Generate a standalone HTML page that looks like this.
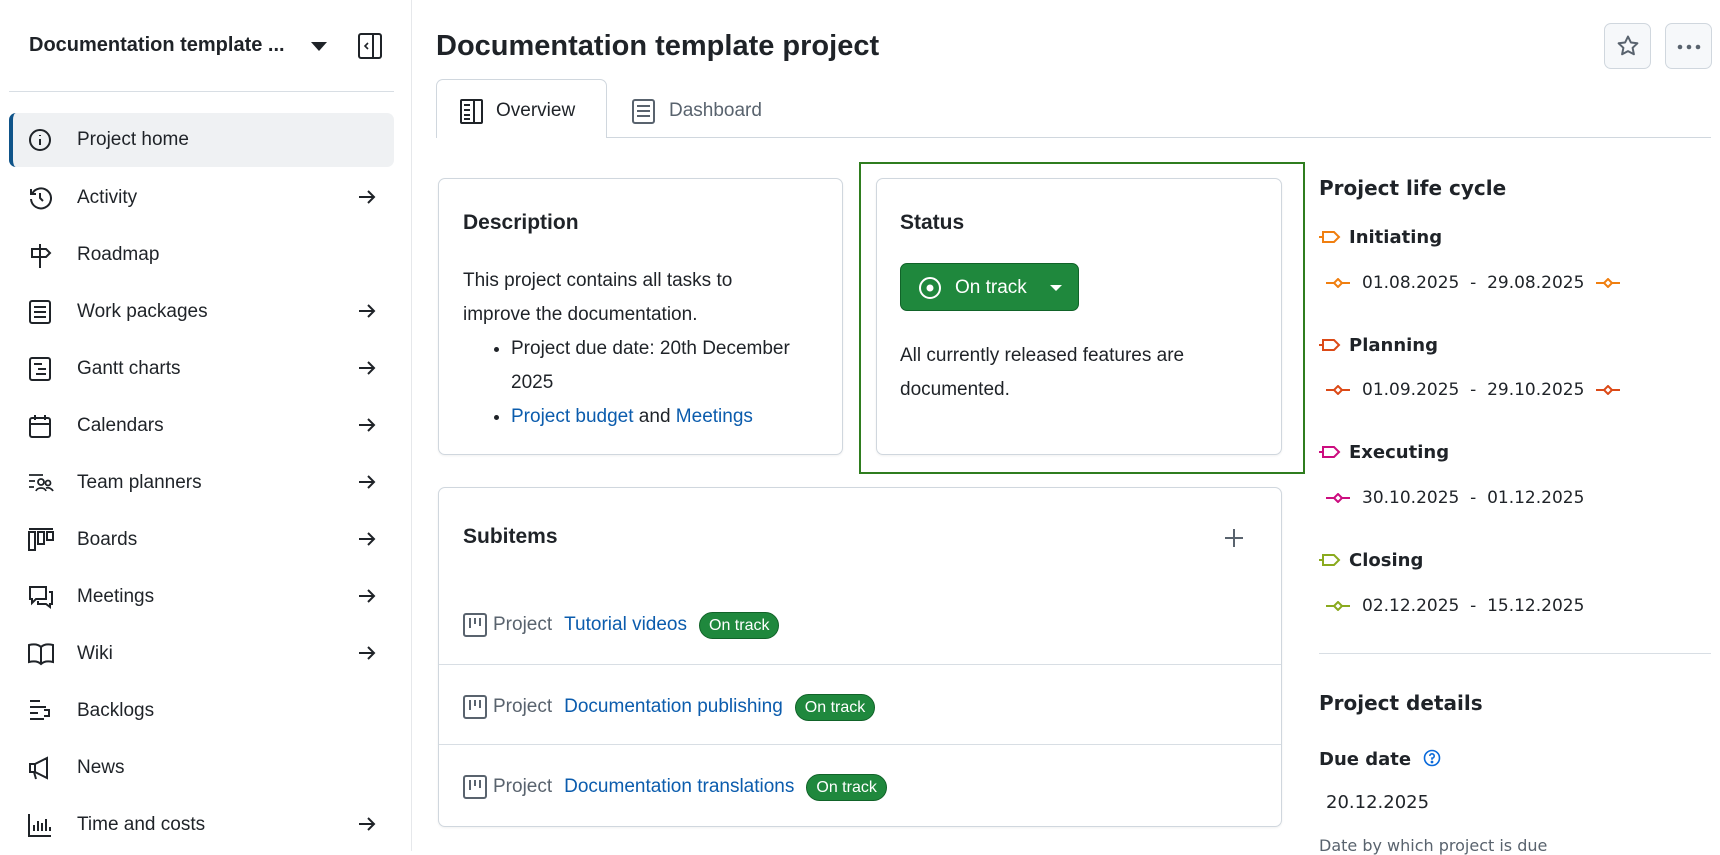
<!DOCTYPE html>
<html><head><meta charset="utf-8"><style>
*{box-sizing:border-box;margin:0;padding:0}
body{width:1720px;height:851px;overflow:hidden;background:#fff;font-family:"Liberation Sans",sans-serif;color:#1f2328;position:relative}
.a{position:absolute}
.side{left:0;top:0;width:412px;height:851px;border-right:1px solid #e6e8eb}
.mi{position:absolute;left:9px;width:385px;height:54px;font-size:19px;display:flex;align-items:center}
.mi svg.ic{position:absolute;left:19px;top:15px}
.mi .t{position:absolute;left:68px}
.mi .ar{position:absolute;left:348px;top:16px}
.card{position:absolute;border:1px solid #d0d7de;border-radius:7px;background:#fff;box-shadow:0 1px 2px rgba(0,0,0,.06)}
h3{font-size:21px;font-weight:bold}
.lnk{color:#0b5cad}
.pill{display:inline-block;background:#1f883d;color:#fff;border:1px solid #116329;border-radius:14px;font-size:16px;padding:3px 9px;line-height:19px}
.rc{font-family:"DejaVu Sans",sans-serif}
.row{position:absolute;left:0;width:843px;font-size:19px;display:flex;align-items:center;height:40px}
</style></head><body>
<div class="a side">
  <div class="a" style="left:29px;top:34px;font-size:20px;font-weight:bold;color:#1f2328">Documentation template ...</div>
  <svg class="a" style="left:311px;top:42px" width="16" height="10"><path d="M0 0h16L8 9z" fill="#1f2328"/></svg>
  <svg class="a" style="left:358px;top:33px" width="24" height="26" fill="none" stroke="#1f2328" stroke-width="2"><rect x="1" y="1" width="22" height="24" rx="2"/><path d="M15 1v24"/><path d="M10 10l-3 3 3 3" stroke-width="1.6"/></svg>
  <div class="a" style="left:9px;top:91px;width:385px;height:1px;background:#d8dee4"></div>

  <div class="mi" style="top:113px;background:#eff1f3;border-radius:7px;border-left:4px solid #0f5489"><svg class="ic" style="left:15px" width="24" height="24" fill="none" stroke="#1f2328" stroke-width="2"><circle cx="12" cy="12" r="10"/><path d="M12 11v6M12 7v1"/></svg><span class="t" style="left:64px">Project home</span></div>
  <div class="mi" style="top:171px"><svg class="ic" width="24" height="24" fill="none" stroke="#1f2328" stroke-width="2"><path d="M4 8a10 10 0 1 1-1 5"/><path d="M3 3v5h5M12 7v5l3 3"/></svg><span class="t">Activity</span><svg class="ar" width="20" height="20" fill="none" stroke="#1f2328" stroke-width="2"><path d="M2 10h15M11 4l6 6-6 6"/></svg></div>
  <div class="mi" style="top:228px"><svg class="ic" width="24" height="26" fill="none" stroke="#1f2328" stroke-width="2"><path d="M12 1v24M4 6h14l4 4-4 4H4z"/></svg><span class="t">Roadmap</span></div>
  <div class="mi" style="top:285px"><svg class="ic" width="24" height="24" fill="none" stroke="#1f2328" stroke-width="2"><rect x="2" y="1" width="20" height="22" rx="2"/><path d="M6 7h12M6 12h12M6 17h12"/></svg><span class="t">Work packages</span><svg class="ar" width="20" height="20" fill="none" stroke="#1f2328" stroke-width="2"><path d="M2 10h15M11 4l6 6-6 6"/></svg></div>
  <div class="mi" style="top:342px"><svg class="ic" width="24" height="24" fill="none" stroke="#1f2328" stroke-width="2"><rect x="2" y="1" width="20" height="22" rx="2"/><path d="M6 7h8M10 12h8M8 17h10"/></svg><span class="t">Gantt charts</span><svg class="ar" width="20" height="20" fill="none" stroke="#1f2328" stroke-width="2"><path d="M2 10h15M11 4l6 6-6 6"/></svg></div>
  <div class="mi" style="top:399px"><svg class="ic" width="24" height="24" fill="none" stroke="#1f2328" stroke-width="2"><rect x="2" y="4" width="20" height="19" rx="2"/><path d="M2 10h20M7 1v5M17 1v5"/></svg><span class="t">Calendars</span><svg class="ar" width="20" height="20" fill="none" stroke="#1f2328" stroke-width="2"><path d="M2 10h15M11 4l6 6-6 6"/></svg></div>
  <div class="mi" style="top:456px"><svg class="ic" width="26" height="24" fill="none" stroke="#1f2328" stroke-width="1.8"><path d="M1 4h14M1 10h6M1 16h5"/><circle cx="13" cy="11" r="3"/><path d="M8 20c1-4 9-4 10 0"/><circle cx="20" cy="12" r="2.5"/><path d="M18 17c3-1 6 1 7 3"/></svg><span class="t">Team planners</span><svg class="ar" width="20" height="20" fill="none" stroke="#1f2328" stroke-width="2"><path d="M2 10h15M11 4l6 6-6 6"/></svg></div>
  <div class="mi" style="top:513px"><svg class="ic" width="26" height="24" fill="none" stroke="#1f2328" stroke-width="2"><rect x="1" y="4" width="6" height="18"/><rect x="10" y="4" width="6" height="12"/><rect x="19" y="4" width="6" height="8"/><path d="M1 1h24"/></svg><span class="t">Boards</span><svg class="ar" width="20" height="20" fill="none" stroke="#1f2328" stroke-width="2"><path d="M2 10h15M11 4l6 6-6 6"/></svg></div>
  <div class="mi" style="top:570px"><svg class="ic" width="26" height="24" fill="none" stroke="#1f2328" stroke-width="2"><path d="M2 2h16v12H8l-4 4v-4H2z"/><path d="M21 7h3v12h-2v3l-4-3h-8v-3"/></svg><span class="t">Meetings</span><svg class="ar" width="20" height="20" fill="none" stroke="#1f2328" stroke-width="2"><path d="M2 10h15M11 4l6 6-6 6"/></svg></div>
  <div class="mi" style="top:627px"><svg class="ic" width="26" height="24" fill="none" stroke="#1f2328" stroke-width="2"><path d="M13 5C10 2 5 2 1 3v17c4-1 9-1 12 2 3-3 8-3 12-2V3c-4-1-9-1-12 2zM13 5v17"/></svg><span class="t">Wiki</span><svg class="ar" width="20" height="20" fill="none" stroke="#1f2328" stroke-width="2"><path d="M2 10h15M11 4l6 6-6 6"/></svg></div>
  <div class="mi" style="top:684px"><svg class="ic" width="24" height="24" fill="none" stroke="#1f2328" stroke-width="2"><path d="M2 2h10M2 8h16M2 14h8M2 20h14M16 11h5v6h-5"/></svg><span class="t">Backlogs</span></div>
  <div class="mi" style="top:741px"><svg class="ic" width="24" height="24" fill="none" stroke="#1f2328" stroke-width="2"><path d="M2 8h5l12-6v20L7 16H2zM7 8v8M6 16l2 7"/></svg><span class="t">News</span></div>
  <div class="mi" style="top:798px"><svg class="ic" width="24" height="24" fill="none" stroke="#1f2328" stroke-width="2"><path d="M1 1v22h22M6 18v-6M10 18V8M14 18v-8M18 18V6M22 18v-4"/></svg><span class="t">Time and costs</span><svg class="ar" width="20" height="20" fill="none" stroke="#1f2328" stroke-width="2"><path d="M2 10h15M11 4l6 6-6 6"/></svg></div>
</div>

<div class="a" style="left:436px;top:30px;font-size:29px;font-weight:bold">Documentation template project</div>
<div class="a" style="left:1604px;top:23px;width:47px;height:46px;border:1px solid #d0d7de;border-radius:7px;background:#f6f8fa"><svg style="position:absolute;left:12px;top:11px" width="22" height="22" fill="none" stroke="#59636e" stroke-width="2"><path d="M11 1.5l2.9 6 6.5.8-4.8 4.5 1.3 6.5L11 16.1 5.1 19.3l1.3-6.5L1.6 8.3l6.5-.8z" stroke-linejoin="round"/></svg></div>
<div class="a" style="left:1665px;top:23px;width:47px;height:46px;border:1px solid #d0d7de;border-radius:7px;background:#f6f8fa"><svg style="position:absolute;left:11px;top:20px" width="24" height="6" fill="#59636e"><circle cx="3" cy="3" r="2.3"/><circle cx="12" cy="3" r="2.3"/><circle cx="21" cy="3" r="2.3"/></svg></div>

<div class="a" style="left:436px;top:137px;width:1275px;height:1px;background:#d0d7de"></div>
<div class="a" style="left:436px;top:79px;width:171px;height:59px;border:1px solid #d0d7de;border-bottom:none;border-radius:7px 7px 0 0;background:#fff"></div>
<svg class="a" style="left:460px;top:99px" width="23" height="25" fill="none" stroke="#1f2328" stroke-width="2"><rect x="1" y="1" width="21" height="23" rx="1"/><path d="M14 1v23M4 6h6M4 11h6M4 16h6M4 20h6"/></svg>
<div class="a" style="left:496px;top:100px;font-size:19px">Overview</div>
<svg class="a" style="left:632px;top:99px" width="23" height="25" fill="none" stroke="#59636e" stroke-width="2"><rect x="1" y="1" width="21" height="23" rx="2"/><path d="M5 7h13M5 12h13M5 17h13"/></svg>
<div class="a" style="left:669px;top:100px;font-size:19px;color:#59636e">Dashboard</div>

<div class="card" style="left:438px;top:178px;width:405px;height:277px">
  <h3 class="a" style="left:24px;top:32px">Description</h3>
  <div class="a" style="left:24px;top:85px;font-size:19px;line-height:34px;width:370px">This project contains all tasks to<br>improve the documentation.
  <ul style="padding-left:48px;margin:0">
  <li>Project due date: 20th December 2025</li>
  <li><span class="lnk">Project budget</span> and <span class="lnk">Meetings</span></li></ul></div>
</div>

<div class="a" style="left:859px;top:162px;width:446px;height:312px;border:2px solid #2f7d1f"></div>
<div class="card" style="left:876px;top:178px;width:406px;height:277px">
  <h3 class="a" style="left:23px;top:32px">Status</h3>
  <div class="a" style="left:23px;top:84px;width:179px;height:48px;background:#1f883d;border:1px solid #116329;border-radius:7px;color:#fff;font-size:19px">
    <svg style="position:absolute;left:17px;top:12px" width="24" height="24" fill="none" stroke="#fff" stroke-width="2"><circle cx="12" cy="12" r="10"/><circle cx="12" cy="12" r="2.5" fill="#fff"/></svg>
    <span style="position:absolute;left:54px;top:13px">On track</span>
    <svg style="position:absolute;left:149px;top:21px" width="12" height="7"><path d="M0 0h12L6 6z" fill="#fff"/></svg>
  </div>
  <div class="a" style="left:23px;top:160px;font-size:19px;line-height:34px">All currently released features are<br>documented.</div>
</div>

<div class="card" style="left:438px;top:487px;width:844px;height:340px">
  <h3 class="a" style="left:24px;top:37px">Subitems</h3>
  <svg class="a" style="left:785px;top:40px" width="20" height="20" stroke="#59636e" stroke-width="2"><path d="M10 1v18M1 10h18"/></svg>
  <div class="row" style="top:117px"><svg style="margin-left:24px" width="24" height="24" fill="none" stroke="#59636e" stroke-width="2"><rect x="1" y="1" width="22" height="22" rx="2"/><path d="M7 5v10M12 5v6M17 5v8"/></svg><span style="color:#59636e;margin-left:6px">Project</span><span class="lnk" style="margin-left:12px">Tutorial videos</span><span class="pill" style="margin-left:12px">On track</span></div>
  <div class="a" style="left:0;top:176px;width:842px;height:1px;background:#d8dee4"></div>
  <div class="row" style="top:199px"><svg style="margin-left:24px" width="24" height="24" fill="none" stroke="#59636e" stroke-width="2"><rect x="1" y="1" width="22" height="22" rx="2"/><path d="M7 5v10M12 5v6M17 5v8"/></svg><span style="color:#59636e;margin-left:6px">Project</span><span class="lnk" style="margin-left:12px">Documentation publishing</span><span class="pill" style="margin-left:12px">On track</span></div>
  <div class="a" style="left:0;top:256px;width:842px;height:1px;background:#d8dee4"></div>
  <div class="row" style="top:279px"><svg style="margin-left:24px" width="24" height="24" fill="none" stroke="#59636e" stroke-width="2"><rect x="1" y="1" width="22" height="22" rx="2"/><path d="M7 5v10M12 5v6M17 5v8"/></svg><span style="color:#59636e;margin-left:6px">Project</span><span class="lnk" style="margin-left:12px">Documentation translations</span><span class="pill" style="margin-left:12px">On track</span></div>
</div>

<div class="rc">
<div class="a" style="left:1319px;top:176px;font-size:20px;font-weight:bold">Project life cycle</div>
<div class="a" style="left:1319px;top:227px;font-size:18px;font-weight:bold"><svg width="24" height="14" style="vertical-align:-1px;margin-right:6px" fill="none" stroke="#f07f10" stroke-width="2"><path d="M0 7h4M4 2h11l5 5-5 5H4z"/></svg>Initiating</div>
<div class="a" style="left:1326px;top:273px;font-size:17px;color:#1f2328"><svg width="24" height="10" style="margin-right:12px" fill="none" stroke="#f07f10" stroke-width="2"><path d="M0 5h8M16 5h8M12 1l4 4-4 4-4-4z"/></svg>01.08.2025&nbsp; - &nbsp;29.08.2025<svg width="24" height="10" style="margin-left:12px" fill="none" stroke="#f07f10" stroke-width="2"><path d="M0 5h8M16 5h8M12 1l4 4-4 4-4-4z"/></svg></div>

<div class="a" style="left:1319px;top:335px;font-size:18px;font-weight:bold"><svg width="24" height="14" style="vertical-align:-1px;margin-right:6px" fill="none" stroke="#dc4a17" stroke-width="2"><path d="M0 7h4M4 2h11l5 5-5 5H4z"/></svg>Planning</div>
<div class="a" style="left:1326px;top:380px;font-size:17px"><svg width="24" height="10" style="margin-right:12px" fill="none" stroke="#dc4a17" stroke-width="2"><path d="M0 5h8M16 5h8M12 1l4 4-4 4-4-4z"/></svg>01.09.2025&nbsp; - &nbsp;29.10.2025<svg width="24" height="10" style="margin-left:12px" fill="none" stroke="#dc4a17" stroke-width="2"><path d="M0 5h8M16 5h8M12 1l4 4-4 4-4-4z"/></svg></div>

<div class="a" style="left:1319px;top:442px;font-size:18px;font-weight:bold"><svg width="24" height="14" style="vertical-align:-1px;margin-right:6px" fill="none" stroke="#cc0d7f" stroke-width="2"><path d="M0 7h4M4 2h11l5 5-5 5H4z"/></svg>Executing</div>
<div class="a" style="left:1326px;top:488px;font-size:17px"><svg width="24" height="10" style="margin-right:12px" fill="none" stroke="#cc0d7f" stroke-width="2"><path d="M0 5h8M16 5h8M12 1l4 4-4 4-4-4z"/></svg>30.10.2025&nbsp; - &nbsp;01.12.2025</div>

<div class="a" style="left:1319px;top:550px;font-size:18px;font-weight:bold"><svg width="24" height="14" style="vertical-align:-1px;margin-right:6px" fill="none" stroke="#8aaa1e" stroke-width="2"><path d="M0 7h4M4 2h11l5 5-5 5H4z"/></svg>Closing</div>
<div class="a" style="left:1326px;top:596px;font-size:17px"><svg width="24" height="10" style="margin-right:12px" fill="none" stroke="#8aaa1e" stroke-width="2"><path d="M0 5h8M16 5h8M12 1l4 4-4 4-4-4z"/></svg>02.12.2025&nbsp; - &nbsp;15.12.2025</div>

<div class="a" style="left:1319px;top:653px;width:392px;height:1px;background:#d8dee4"></div>
<div class="a" style="left:1319px;top:691px;font-size:20px;font-weight:bold">Project details</div>
<div class="a" style="left:1319px;top:749px;font-size:18px;font-weight:bold">Due date <svg width="18" height="18" style="vertical-align:-2px;margin-left:6px" fill="none" stroke="#0969da" stroke-width="1.6"><circle cx="9" cy="9" r="7.5"/><path d="M6.8 7a2.2 2.2 0 1 1 2.2 2.2v1.5"/><circle cx="9" cy="13" r=".6" fill="#0969da"/></svg></div>
<div class="a" style="left:1326px;top:792px;font-size:18px">20.12.2025</div>
<div class="a" style="left:1319px;top:836px;font-size:16px;color:#59636e">Date by which project is due</div>
</div>
</body></html>
